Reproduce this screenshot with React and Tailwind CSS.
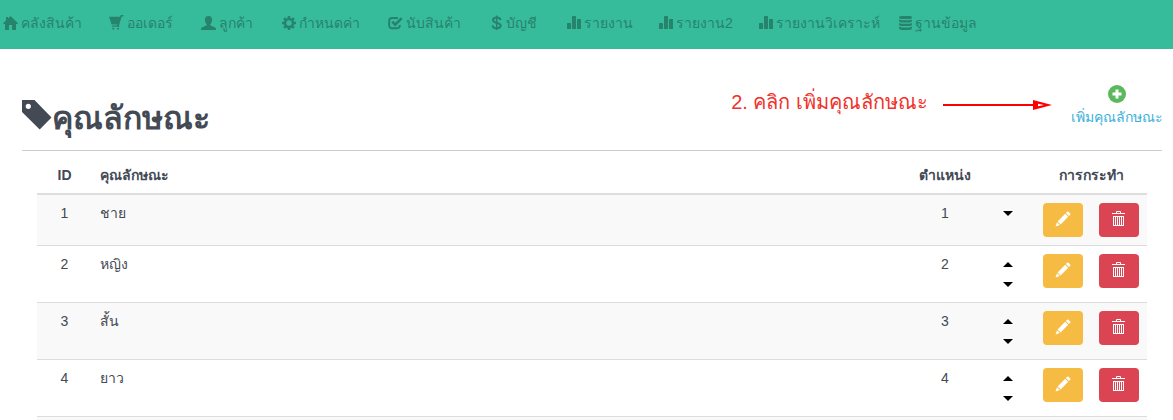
import React from "react";

const HomeIcon = () => (
  <svg width="15" height="14" viewBox="0 0 15 14" fill="currentColor" aria-hidden="true">
    <path d="M7.500 0 15 7.300 14.200 8H13v6H9V9H6v5H2V8H.8L0 7.300 3 4.400V1h2v1.400z" />
  </svg>
);

const CartIcon = () => (
  <svg width="15" height="15" viewBox="0 0 15 15" fill="currentColor" aria-hidden="true">
    <path d="M0 1.800h11L11.500.4Q11.700 0 12.200 0h2.300v1.400h-1.800L10 10.300l.6 1.500H3v-1.300h5l.3-.9H2.600z" />
    <rect x="3.300" y="12.800" width="2" height="1.800" rx=".7" />
    <rect x="8" y="12.800" width="2" height="1.800" rx=".7" />
  </svg>
);

const UserIcon = () => (
  <svg width="15" height="14" viewBox="0 0 15 14" fill="currentColor" aria-hidden="true">
    <path d="M7.5 0c2.4 0 3.8 1.6 3.6 4-.1 2-.9 3.300-1.700 4.200-.4.500-.2 1.100.4 1.400l3.700 1.700c.9.400 1.500 1 1.500 1.800v.9H0v-.9c0-.8.600-1.400 1.500-1.800l3.700-1.700c.600-.300.800-.900.400-1.400C4.800 7.300 4 6 3.900 4 3.700 1.600 5.100 0 7.500 0z" />
  </svg>
);

const CogIcon = () => (
  <svg width="14" height="14" viewBox="0 0 14 14" fill="none" stroke="currentColor" aria-hidden="true">
    <circle cx="7" cy="7" r="4" strokeWidth="2.600" />
    <path d="M7 0v2M7 12v2M0 7h2M12 7h2M2.050 2.050l1.400 1.400M10.550 10.550l1.400 1.400M2.050 11.950l1.400-1.400M10.550 3.450l1.400-1.400" strokeWidth="2.600" />
  </svg>
);

const CheckIcon = () => (
  <svg width="15" height="14" viewBox="0 0 15 14" fill="none" stroke="currentColor" aria-hidden="true">
    <path d="M10 1.900H4A2.800 2.800 0 0 0 1.200 4.700v4.800A2.800 2.800 0 0 0 4 12.300h5a2.800 2.800 0 0 0 2.800-2.800V9" strokeWidth="2" />
    <path d="m4.300 5.700 2.900 3 6.500-6.500" strokeWidth="2.600" />
  </svg>
);

const DollarIcon = () => (
  <svg width="12" height="16" viewBox="0 0 12 16" fill="none" stroke="currentColor" aria-hidden="true">
    <path d="M9.500 5.200C9.300 3.500 8 2.600 5.700 2.600S2 3.500 2 5.100c0 3.800 7.700 1.900 7.700 5.500 0 1.700-1.600 2.700-3.900 2.700s-4-1-4.200-3" strokeWidth="2" />
    <path d="M5.700.5v14.500" strokeWidth="1.500" />
  </svg>
);

const StatsIcon = () => (
  <svg width="14" height="13" viewBox="0 0 14 13" fill="currentColor" aria-hidden="true">
    <rect x="0" y="7" width="4" height="6" rx=".6" />
    <rect x="5" y="0" width="4" height="13" rx=".6" />
    <rect x="10" y="3" width="4" height="10" rx=".6" />
  </svg>
);

const DatabaseIcon = () => (
  <svg width="13" height="14" viewBox="0 0 13 14" fill="currentColor" aria-hidden="true">
    <path d="M2 0h9q2 .4 2 1.400T11 2.900H2Q0 2.400 0 1.400T2 0zM0 3.400q1 .8 2.500.8h8q1.500 0 2.500-.8v1.500q-.5 1.500-2.500 1.500h-8Q.5 6.400 0 4.900zM0 7q1 .8 2.500.8h8q1.500 0 2.500-.8v1.500q-.5 1.500-2.500 1.500h-8Q.5 10 0 8.500zM0 10.600q1 .8 2.500.8h8q1.500 0 2.500-.8v1.600q-.5 1.700-2.500 1.700h-8q-2 0-2.500-1.700z" />
  </svg>
);

const TagIcon = () => (
  <svg width="30" height="30" viewBox="0 0 30 30" fill="currentColor" fillRule="evenodd" aria-hidden="true">
    <path d="M0 0h12.500L29.500 17.500 17.700 29.500 0 12zM6.300 3.700a2.600 2.600 0 1 0 0 5.200 2.600 2.600 0 0 0 0-5.200z" />
  </svg>
);

const PlusIcon = () => (
  <svg width="18" height="18" viewBox="0 0 18 18" aria-hidden="true">
    <circle cx="9" cy="9" r="9" fill="#5cb85c" />
    <path d="M9 4.500v9M4.500 9h9" stroke="#fff" strokeWidth="3" />
  </svg>
);

const PencilIcon = () => (
  <svg width="16" height="16" viewBox="0 0 16 16" fill="currentColor" aria-hidden="true">
    <path d="M12.200.8a1 1 0 0 1 1.400 0l1.600 1.600a1 1 0 0 1 0 1.400l-1.300 1.300-3-3zM10.200 2.800l3 3-7.600 7.600-3-3zM2 11.200 4.800 14 .5 15.500z" />
  </svg>
);

const TrashIcon = () => (
  <svg width="14" height="16" viewBox="0 0 14 16" fill="none" stroke="currentColor" aria-hidden="true">
    <path d="M4.500 2.500v-2h4v2M0 2.500h13M1 5.500h11M1 14.500h11" />
    <path d="M1.500 5v10M3.500 5v10M5.500 5v10M7.500 5v10M9.500 5v10M11.500 5v10" />
  </svg>
);

const navItems = [
  { icon: HomeIcon, label: "คลังสินค้า", width: "w-[106px]" },
  { icon: CartIcon, label: "ออเดอร์", width: "w-[92px]" },
  { icon: UserIcon, label: "ลูกค้า", width: "w-[81px]" },
  { icon: CogIcon, label: "กำหนดค่า", width: "w-[106px]" },
  { icon: CheckIcon, label: "นับสินค้า", width: "w-[103px]" },
  { icon: DollarIcon, label: "บัญชี", width: "w-[76px]" },
  { icon: StatsIcon, label: "รายงาน", width: "w-[92px]" },
  { icon: StatsIcon, label: "รายงาน2", width: "w-[100px]" },
  { icon: StatsIcon, label: "รายงานวิเคราะห์", width: "w-[140px]" },
  { icon: DatabaseIcon, label: "ฐานข้อมูล", width: "w-[90px]" },
];

const rows = [
  { id: 1, name: "ชาย", up: false },
  { id: 2, name: "หญิง", up: true },
  { id: 3, name: "สั้น", up: true },
  { id: 4, name: "ยาว", up: true },
];

function MoveButton({ up }) {
  return (
    <button type="button" aria-label={up ? "เลื่อนขึ้น" : "เลื่อนลง"} className="flex h-5 w-full items-center justify-center text-black">
      <svg width="10" height="5" viewBox="0 0 10 5" fill="currentColor" aria-hidden="true">
        <path d={up ? "M0 5 5 0l5 5z" : "M0 0h10L5 5z"} />
      </svg>
    </button>
  );
}

export default function App() {
  return (
    <div className="overflow-hidden bg-white font-['Liberation_Sans',Arial,sans-serif] text-sm leading-5 text-[#434a54]">
      <nav className="flex h-[49px] items-center bg-[#37bc9b] pl-[3px] text-[#26836c]">
        {navItems.map(({ icon: Icon, label, width }) => (
          <a key={label} href="#" className={`flex shrink-0 items-center gap-[3px] whitespace-nowrap pb-1 ${width}`}>
            <Icon />
            <span>{label}</span>
          </a>
        ))}
      </nav>

      <main className="pl-[22px] pr-[11px]">
        <header className="flex h-[102px] items-start border-b border-[#ccc] pt-9">
          <h1 className="flex items-start pt-[15px] text-[32px] font-bold leading-9">
            <TagIcon />
            <span>คุณลักษณะ</span>
          </h1>
          <p className="ml-auto mr-[15px] pt-[3px] text-xl leading-7 text-[#f0322a]">2. คลิก เพิ่มคุณลักษณะ</p>
          <svg className="mr-5 mt-[14px]" width="109" height="12" viewBox="0 0 109 12" fill="none" aria-hidden="true">
            <path d="M0 6h92" stroke="#f00" strokeWidth="2" />
            <path d="M90 1l19 5-19 5z" fill="#f00" />
            <path d="M95 4.800l6 1.200-6 1.200z" fill="#fff" />
          </svg>
          <a href="#" className="flex w-[90px] flex-col items-center gap-1 whitespace-nowrap text-[#3bafda]">
            <PlusIcon />
            <span>เพิ่มคุณลักษณะ</span>
          </a>
        </header>

        <div className="px-[15px] pt-[6px]">
          <table className="w-full table-fixed border-separate border-spacing-0">
            <thead>
              <tr>
                <th className="w-[55px] border-b-2 border-[#ddd] p-2 text-center">ID</th>
                <th className="border-b-2 border-[#ddd] p-2 text-left">คุณลักษณะ</th>
                <th className="w-[70px] whitespace-nowrap border-b-2 border-[#ddd] py-2 text-center">ตำแหน่ง</th>
                <th className="w-[55px] border-b-2 border-[#ddd] p-2" aria-label="เลื่อน"></th>
                <th className="w-[112px] border-b-2 border-[#ddd] p-2 text-center">การกระทำ</th>
              </tr>
            </thead>
            <tbody className="[&_td]:border-b [&_td]:border-[#ddd] [&_td]:p-2 [&_td]:align-top">
              {rows.map((row) => (
                <tr key={row.id} className="odd:bg-[#f9f9f9]">
                  <td className="text-center">{row.id}</td>
                  <td>{row.name}</td>
                  <td className="text-center">{row.id}</td>
                  <td>
                    {row.up && <MoveButton up />}
                    <MoveButton />
                  </td>
                  <td>
                    <div className="flex justify-between">
                      <button type="button" aria-label="แก้ไข" className="flex h-[34px] w-10 items-center justify-center rounded bg-[#f6bb42] pb-[2px] text-white">
                        <PencilIcon />
                      </button>
                      <button type="button" aria-label="ลบ" className="flex h-[34px] w-10 items-center justify-center rounded bg-[#da4453] pb-[2px] text-white">
                        <TrashIcon />
                      </button>
                    </div>
                  </td>
                </tr>
              ))}
            </tbody>
          </table>
          <div className="h-[3px] bg-[#f9f9f9]"></div>
        </div>
      </main>
    </div>
  );
}
